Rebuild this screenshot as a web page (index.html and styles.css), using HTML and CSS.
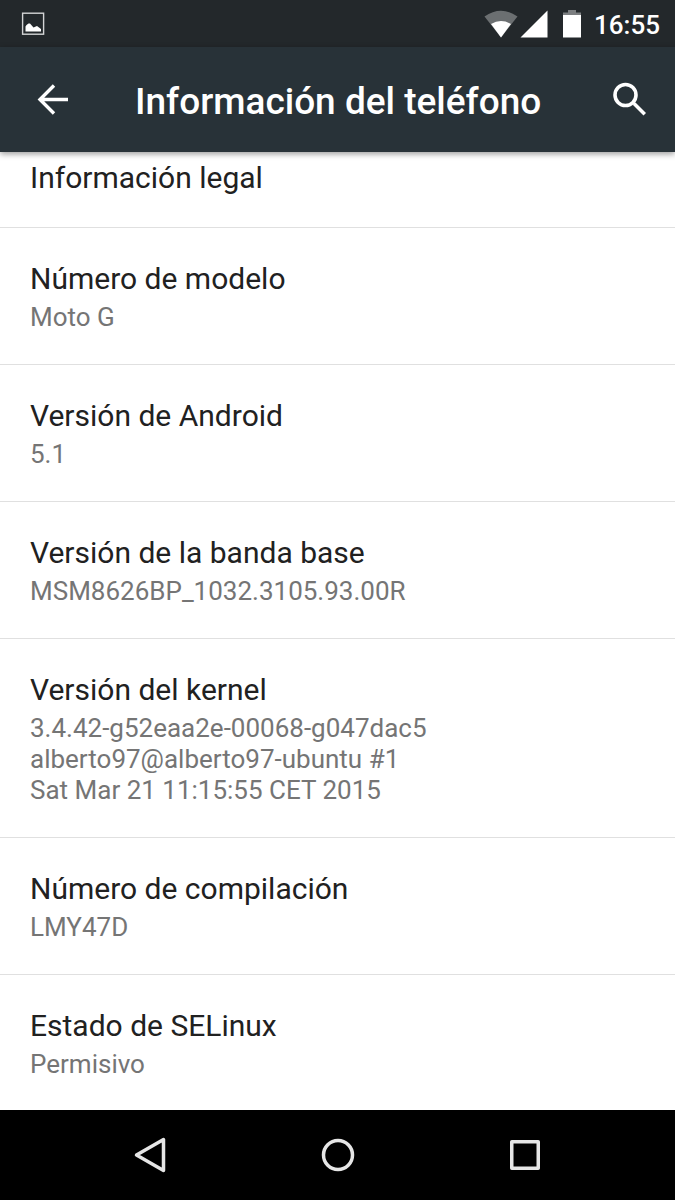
FILE: index.html
```html
<!DOCTYPE html>
<html lang="es">
<head>
<meta charset="utf-8">
<meta name="viewport" content="width=device-width, initial-scale=1">
<title>Información del teléfono</title>
<link rel="stylesheet" href="styles.css">
</head>
<body>
<div class="status-bar">
  <svg class="notification" viewBox="0 0 24 24" aria-hidden="true">
    <rect x="1.600" y="1.200" width="21" height="21" fill="none" stroke="#d3d4d5" stroke-width="1.400"/>
    <path d="M4.500 19.500v-5l1-1.500 2-1.500 1.500 0 3.500 4 3.500-1.500 4 3v2.500z" fill="#fff"/>
  </svg>
  <div class="indicators">
    <svg class="wifi" viewBox="0 0 34 28" aria-hidden="true">
      <path d="M17 27.500L0.500 6.500Q17-5 33.500 6.500z" fill="#6b6f71"/>
      <path d="M17 27.500L7 14Q17 8 27 14z" fill="#fff"/>
    </svg>
    <svg class="signal" viewBox="0 0 28 28" aria-hidden="true">
      <path d="M0.500 27.500L27.500 0.500v27z" fill="#fff"/>
    </svg>
    <svg class="battery" viewBox="0 0 20 28" aria-hidden="true">
      <path d="M1 5V2.500h5V0h8v2.500h5V5z" fill="#7b7e80"/>
      <path d="M1 5h18v22.500H1z" fill="#fff"/>
    </svg>
    <time class="clock">16:55</time>
  </div>
</div>
<header class="app-bar">
  <button class="icon-button" type="button" aria-label="Atrás">
    <svg class="icon" viewBox="0 0 36 36" aria-hidden="true">
      <path d="M33 17.500H5M19 3.500L5 17.500l14 14" fill="none" stroke="#fff" stroke-width="3.400"/>
    </svg>
  </button>
  <h1 class="title">Información del teléfono</h1>
  <button class="icon-button" type="button" aria-label="Buscar">
    <svg class="icon" viewBox="0 0 36 36" aria-hidden="true">
      <circle cx="13.500" cy="13" r="10.500" fill="none" stroke="#fff" stroke-width="3.600"/>
      <path d="M21.500 21l2-.500 10.500 10.500-2.500 2.500L21 23z" fill="#fff"/>
    </svg>
  </button>
</header>
<main class="list">
  <section class="item item-first">
    <h2 class="name">Información legal</h2>
  </section>
  <section class="item">
    <h2 class="name">Número de modelo</h2>
    <p class="value">Moto G</p>
  </section>
  <section class="item">
    <h2 class="name">Versión de Android</h2>
    <p class="value">5.1</p>
  </section>
  <section class="item">
    <h2 class="name">Versión de la banda base</h2>
    <p class="value">MSM8626BP_1032.3105.93.00R</p>
  </section>
  <section class="item">
    <h2 class="name">Versión del kernel</h2>
    <p class="value">3.4.42-g52eaa2e-00068-g047dac5<br>alberto97@alberto97-ubuntu #1<br>Sat Mar 21 11:15:55 CET 2015</p>
  </section>
  <section class="item">
    <h2 class="name">Número de compilación</h2>
    <p class="value">LMY47D</p>
  </section>
  <section class="item">
    <h2 class="name">Estado de SELinux</h2>
    <p class="value">Permisivo</p>
  </section>
</main>
<nav class="nav-bar">
  <button class="nav-button" type="button" aria-label="Atrás">
    <svg class="nav-icon" viewBox="0 0 36 36" aria-hidden="true">
      <path d="M31.500 2.500v31L4.500 18z" fill="none" stroke="#e6e6e6" stroke-width="3.500" stroke-linejoin="round"/>
    </svg>
  </button>
  <button class="nav-button" type="button" aria-label="Inicio">
    <svg class="nav-icon" viewBox="0 0 36 36" aria-hidden="true">
      <circle cx="18" cy="18" r="14.500" fill="none" stroke="#e6e6e6" stroke-width="3.500"/>
    </svg>
  </button>
  <button class="nav-button" type="button" aria-label="Recientes">
    <svg class="nav-icon" viewBox="0 0 36 36" aria-hidden="true">
      <rect x="4.750" y="4.750" width="26.500" height="26.500" fill="none" stroke="#e6e6e6" stroke-width="3.500" stroke-linejoin="round"/>
    </svg>
  </button>
</nav>
</body>
</html>
```
FILE: styles.css
```css
* {
  box-sizing: border-box;
}

body {
  margin: 0;
  min-height: 100vh;
  display: flex;
  flex-direction: column;
  background: #fff;
  color: #212121;
  font-family: Roboto, "Noto Sans", sans-serif;
}

button {
  border: 0;
  padding: 0;
  background: none;
  cursor: pointer;
}

svg {
  display: block;
}

.status-bar {
  display: flex;
  align-items: center;
  justify-content: space-between;
  height: 47px;
  padding: 0 15px 0 21px;
  background: #23282b;
}

.notification {
  width: 24px;
  height: 24px;
}

.indicators {
  display: flex;
  align-items: center;
}

.wifi {
  width: 34px;
  height: 28px;
}

.signal {
  width: 28px;
  height: 28px;
  margin: 0 14px 0 2px;
}

.battery {
  width: 20px;
  height: 28px;
}

.clock {
  margin-left: 12px;
  padding-top: 2px;
  color: #fff;
  font-size: 26px;
  font-weight: 500;
  line-height: 32px;
}

.app-bar {
  position: relative;
  display: flex;
  align-items: center;
  height: 105px;
  padding: 0 27px 0 35px;
  background: #283238;
  box-shadow: 0 2px 6px rgba(0, 0, 0, 0.4);
}

.icon {
  width: 36px;
  height: 36px;
}

.title {
  flex: 1;
  margin: 0;
  padding: 4px 0 0 64px;
  color: #fff;
  font-size: 37px;
  font-weight: 500;
  line-height: 44px;
}

.list {
  flex: 1;
}

.item {
  padding: 33px 30px 31px;
  border-bottom: 1px solid #e0e0e0;
}

.item-first {
  padding-top: 8px;
}

.item:last-child {
  padding-bottom: 30px;
  border-bottom: 0;
}

.name {
  margin: 0;
  font-size: 30px;
  font-weight: 400;
  line-height: 36px;
}

.value {
  margin: 5px 0 0;
  color: #757575;
  font-size: 26px;
  line-height: 31px;
}

.nav-bar {
  display: flex;
  height: 90px;
  padding: 0 56px;
  background: #000;
}

.nav-button {
  flex: 1;
  display: flex;
  align-items: center;
  justify-content: center;
}

.nav-icon {
  width: 36px;
  height: 36px;
}
```
